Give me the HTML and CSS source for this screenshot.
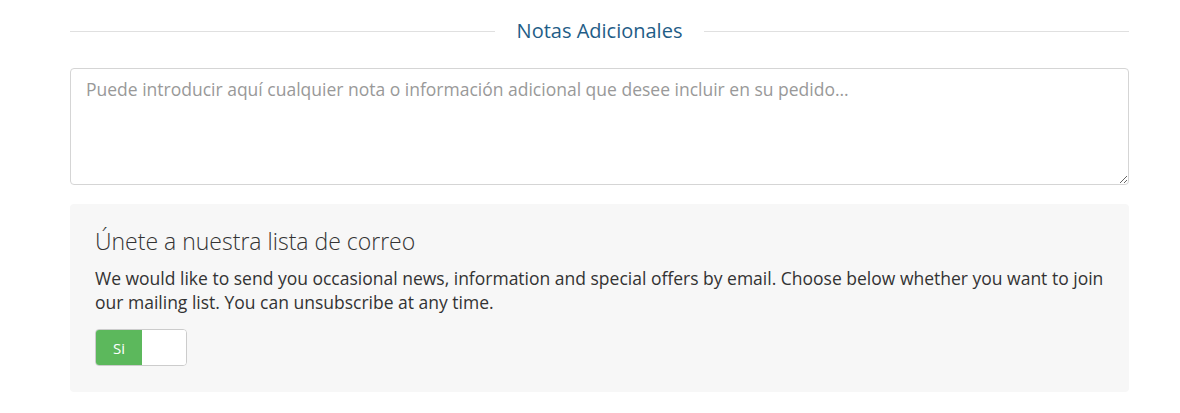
FILE: index.html
```html
<!DOCTYPE html>
<html lang="es">
<head>
<meta charset="utf-8">
<link rel="stylesheet" href="styles.css">
</head>
<body>
<div class="container">
  <div class="section-title">
    <span class="rule"></span>
    <h2 class="title">Notas Adicionales</h2>
    <span class="rule"></span>
  </div>
  <textarea class="notes" placeholder="Puede introducir aquí cualquier nota o información adicional que desee incluir en su pedido..."></textarea>
  <div class="mailing">
    <h3 class="mailing-title">Únete a nuestra lista de correo</h3>
    <p class="mailing-text">We would like to send you occasional news, information and special offers by email. Choose below whether you want to join our mailing list. You can unsubscribe at any time.</p>
    <div class="toggle">
      <span class="toggle-on">Si</span>
      <span class="toggle-handle"></span>
    </div>
  </div>
</div>
</body>
</html>
```
FILE: styles.css
```css
* { box-sizing: border-box; }
html, body { margin: 0; padding: 0; background: #fff; }
body { font-family: "Open Sans", "Liberation Sans", sans-serif; color: #333; }
.container { width: 1059px; margin-left: 70px; padding-top: 17px; }
.section-title { display: flex; align-items: center; gap: 22px; height: 28px; }
.rule { flex: 1; height: 1px; background: #e0e0e0; margin-top: 0; }
.title { margin: 0; font-size: 20px; line-height: 28px; font-weight: 400; color: #1f5d87; }
.notes {
  display: block; width: 100%; height: 117px; margin-top: 23px;
  border: 1px solid #d5d5d5; border-radius: 4px; padding: 8px 15px;
  font-family: "Open Sans", "Liberation Sans", sans-serif; font-size: 17.5px; line-height: 24px;
  color: #555; resize: vertical; outline: none;
}
.notes::placeholder { color: #999; }
.mailing { margin-top: 19px; background: #f7f7f7; border-radius: 4px; padding: 26px 25px 26px; }
.mailing-title { margin: 0; font-family: "Open Sans", Lato, sans-serif; font-weight: 300; font-size: 23px; line-height: 22px; color: #333; letter-spacing: 0; }
.mailing-text { margin: 14px 0 0; font-size: 17.5px; line-height: 24px; color: #333; }
.toggle { margin-top: 15px; display: flex; width: 92px; height: 37px; border: 1px solid #ccc; border-radius: 4px; overflow: hidden; background: #fff; }
.toggle-on { width: 46px; background: #5cb85c; color: #fff; font-size: 15px; display: flex; align-items: center; justify-content: center; }
.toggle-handle { flex: 1; background: #fff; }
```
